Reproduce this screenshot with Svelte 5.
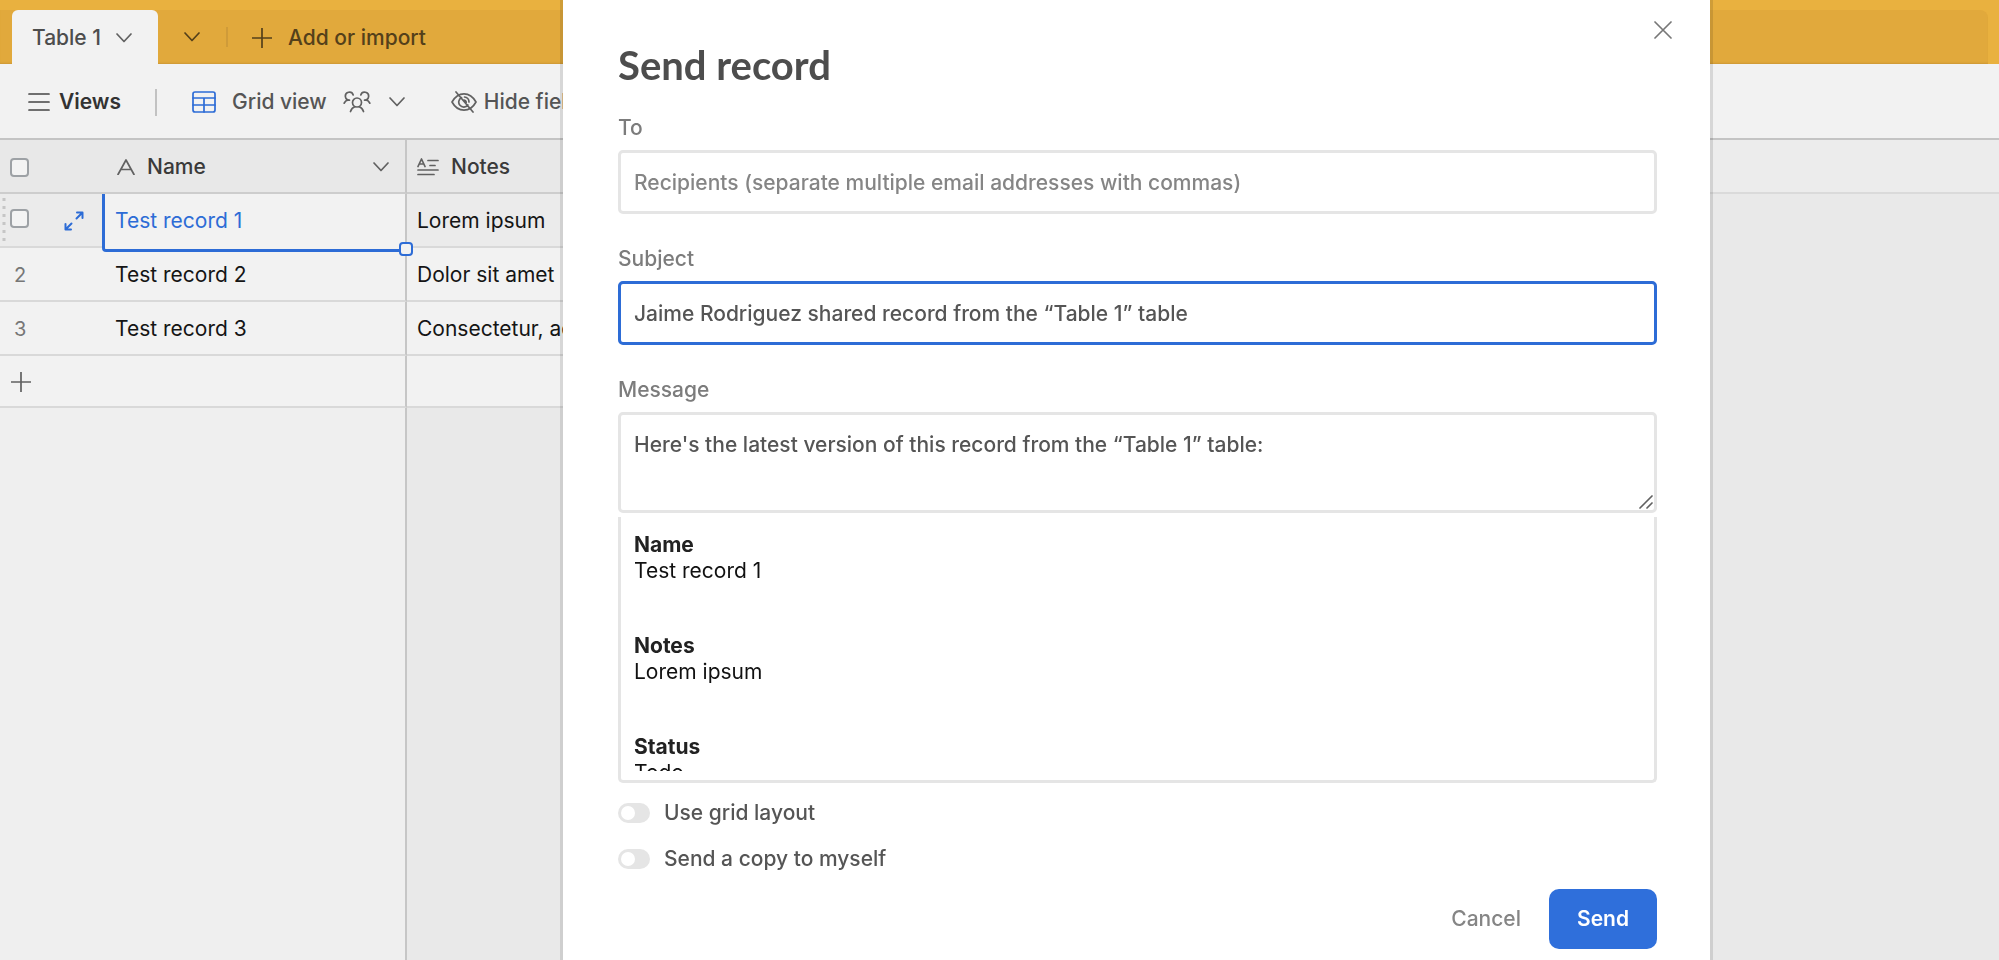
<script>
  const records = [
    { id: 2, name: 'Test record 2', notes: 'Dolor sit amet' },
    { id: 3, name: 'Test record 3', notes: 'Consectetur, adipiscing' },
  ];
  const preview = [
    { label: 'Name', value: 'Test record 1' },
    { label: 'Notes', value: 'Lorem ipsum' },
    { label: 'Status', value: 'Todo' },
  ];
  let to = $state('');
  let subject = $state('Jaime Rodriguez shared record from the “Table 1” table');
  let message = $state('Here\'s the latest version of this record from the “Table 1” table:');
  let gridLayout = $state(false);
  let copySelf = $state(false);
</script>

{#snippet chevron()}
  <svg class="chevron" viewBox="0 0 16 10" aria-hidden="true"><path d="M1 1l7 7.5L15 1" /></svg>
{/snippet}

{#snippet plus()}
  <svg class="plus" viewBox="0 0 20 20" aria-hidden="true"><path d="M10 0v20M0 10h20" /></svg>
{/snippet}

<div class="page">
  <nav class="tabs">
    <div class="strip">
      <button class="tab">Table 1 {@render chevron()}</button>
      <button class="more" aria-label="All tables">{@render chevron()}</button>
      <span class="split"></span>
      <button class="add">{@render plus()} Add or import</button>
    </div>
  </nav>

  <div class="toolbar">
    <button class="views">
      <svg width="22" height="20" viewBox="0 0 22 20" aria-hidden="true"><path d="M1 2h20M1 10h20M1 18h20" /></svg>
      Views
    </button>
    <span class="rule"></span>
    <button class="view">
      <svg class="blue" width="24" height="22" viewBox="0 0 24 22" aria-hidden="true">
        <rect x="1" y="1" width="22" height="20" rx="2" />
        <path d="M1 7h22M1 14h22M12 7v14" />
      </svg>
      <span>Grid view</span>
      <svg class="people" width="28" height="22" viewBox="0 0 28 22" aria-hidden="true">
        <circle cx="14" cy="11.500" r="4.500" />
        <path d="M7.500 20.500c1-2.800 2.800-4.200 4.300-4.700M20.500 20.500c-1-2.800-2.800-4.200-4.300-4.700" />
        <path d="M6.500 9.200A4 4 0 1 1 10.200 4M5.500 9C3.500 9.200 2 10.400 1.200 12.200" />
        <path d="M21.500 9.200A4 4 0 1 0 17.800 4M22.500 9c2 .2 3.500 1.400 4.300 3.200" />
      </svg>
      {@render chevron()}
    </button>
    <button class="hide">
      <svg width="26" height="22" viewBox="0 0 26 22" aria-hidden="true">
        <path d="M1 11C4 5.500 8 2.800 13 2.800S22 5.500 25 11c-3 5.500-7 8.200-12 8.200S4 16.500 1 11z" />
        <path d="M10.500 6.600a5 5 0 1 0 6.300 7.400M13.500 6a5 5 0 0 1 4.500 5M12.800 9a2.400 2.400 0 0 1 2.400 2.500M5 1l17 20" />
      </svg>
      Hide fields
    </button>
  </div>

  <table>
    <colgroup><col class="c-num" /><col class="c-name" /><col class="c-notes" /><col /></colgroup>
    <thead>
      <tr>
        <th><input type="checkbox" aria-label="Select all records" /></th>
        <th class="name">
          <div class="head">
            <svg width="18" height="16" viewBox="0 0 18 16" aria-hidden="true"><path d="M1 15.500L9 1l8 14.500M4 10.500h10" /></svg>
            <span>Name</span>
            {@render chevron()}
          </div>
        </th>
        <th class="notes">
          <div class="head">
            <svg class="long" width="22" height="18" viewBox="0 0 22 18" aria-hidden="true"><path d="M1 8.500L4.500 1 8 8.500M2.200 6h4.600M11 2.500h10M13 7.500h5M1 12h20M1 16.500h16" /></svg>
            <span>Notes</span>
          </div>
        </th>
        <th class="rest"></th>
      </tr>
    </thead>
    <tbody>
      <tr class="active">
        <td>
          <div class="lead">
            <svg class="drag" width="4" height="48" viewBox="0 0 4 48" aria-hidden="true"><path d="M2 1v47" /></svg>
            <input type="checkbox" aria-label="Select Test record 1" />
            <button aria-label="Expand record">
              <svg class="blue expand" width="20" height="20" viewBox="0 0 20 20" aria-hidden="true"><path d="M12.500 7.500L18.500 1.500M13 1.500h5.500V7M7.500 12.500L1.500 18.500M1.500 13v5.500H7" /></svg>
            </button>
          </div>
        </td>
        <td class="name">Test record 1<span class="outline"></span><span class="handle"></span></td>
        <td class="notes">Lorem ipsum</td>
        <td class="rest"></td>
      </tr>
      {#each records as record (record.id)}
        <tr>
          <td class="num">{record.id}</td>
          <td class="name">{record.name}</td>
          <td class="notes">{record.notes}</td>
          <td class="rest"></td>
        </tr>
      {/each}
      <tr class="new">
        <td><button aria-label="Add record">{@render plus()}</button></td>
        <td class="name"></td>
        <td class="notes"></td>
        <td class="rest"></td>
      </tr>
    </tbody>
  </table>
  <div class="below"></div>
</div>

<div class="overlay">
  <dialog open aria-labelledby="title">
    <button class="close" aria-label="Close">
      <svg width="18" height="18" viewBox="0 0 18 18" aria-hidden="true"><path d="M1 1l16 16M17 1L1 17" /></svg>
    </button>
    <h1 id="title">Send record</h1>

    <div class="field">
      <label for="to">To</label>
      <input id="to" type="text" placeholder="Recipients (separate multiple email addresses with commas)" bind:value={to} />
    </div>
    <div class="field">
      <label for="subject">Subject</label>
      <input id="subject" class="current" type="text" bind:value={subject} />
    </div>
    <div class="field message">
      <label for="message">Message</label>
      <div class="area">
        <textarea id="message" bind:value={message}></textarea>
        <svg class="grip" width="14" height="14" viewBox="0 0 14 14" aria-hidden="true"><path d="M1 13L13 1M8 13l5-5" /></svg>
      </div>
    </div>
    <div class="preview">
      <dl>
        {#each preview as item (item.label)}
          <div>
            <dt>{item.label}</dt>
            <dd>{item.value}</dd>
          </div>
        {/each}
      </dl>
    </div>

    <div class="toggles">
      <label><input type="checkbox" bind:checked={gridLayout} />Use grid layout</label>
      <label><input type="checkbox" bind:checked={copySelf} />Send a copy to myself</label>
    </div>

    <div class="actions">
      <button class="cancel">Cancel</button>
      <button class="send">Send</button>
    </div>
  </dialog>
</div>

<style>
  :global(body) {
    font-family: Inter, 'Liberation Sans', sans-serif;
    font-size: 21px;
    font-weight: 500;
    line-height: 26px;
    color: #555;
    background: #e9e9e9;
  }
  * { box-sizing: border-box; }
  button {
    display: flex;
    align-items: center;
    border: 0;
    padding: 0;
    background: none;
    font: inherit;
    color: inherit;
    white-space: nowrap;
  }
  svg {
    flex: none;
    fill: none;
    stroke: #616161;
    stroke-width: 1.7;
    stroke-linecap: round;
    stroke-linejoin: round;
  }
  .chevron { width: 16px; height: 10px; }
  .plus { width: 20px; height: 20px; stroke-linecap: butt; }
  .blue { stroke: #2d6cd6; }
  .page {
    display: flex;
    flex-direction: column;
    min-height: 100vh;
  }

  .tabs {
    background: #e9b13f;
    padding: 10px 11px 0 0;
  }
  .strip {
    display: flex;
    align-items: center;
    height: 54px;
    padding-left: 12px;
    background: #e1a93c;
    border-top-right-radius: 8px;
    box-shadow: inset 0 -2px 2px -1px #cd9936;
    color: #54401a;
  }
  .strip svg { stroke: #54401a; }
  .tab {
    gap: 15px;
    height: 54px;
    padding: 2px 26px 0 20px;
    background: #f2f2f2;
    border-radius: 6px 6px 0 0;
    color: #4d4d4d;
  }
  .strip .tab svg { stroke: #616161; }
  .more { margin-left: 26px; }
  .split {
    width: 2px;
    height: 20px;
    margin: 0 24px 0 26px;
    background: #cf9b39;
  }
  .add {
    gap: 16px;
    padding-top: 2px;
  }

  .toolbar {
    display: flex;
    align-items: center;
    height: 76px;
    padding: 2px 0 0 28px;
    overflow: hidden;
    background: #f2f2f2;
    border-bottom: 2px solid #c4c4c4;
  }
  .views {
    gap: 9px;
    font-weight: 600;
    color: #333;
  }
  .views svg { stroke: #444; }
  .rule {
    width: 2px;
    height: 27px;
    margin: 0 35px 0 34px;
    background: #c2c2c2;
  }
  .view { gap: 16px; }
  .view .chevron { margin-left: 2px; }
  .hide {
    gap: 7px;
    margin-left: 46px;
  }

  table {
    width: 100%;
    table-layout: fixed;
    border-spacing: 0;
    color: #151515;
  }
  .c-num { width: 102px; }
  .c-name { width: 305px; }
  .c-notes { width: 400px; }
  th, td {
    height: 54px;
    padding: 2px 0 0;
    background: #f2f2f2;
    border-bottom: 2px solid #d9d9d9;
    font-weight: 400;
    text-align: left;
    white-space: nowrap;
  }
  th {
    background: #e8e8e8;
    border-bottom-color: #cdcdcd;
    font-weight: 500;
    color: #3a3a3a;
  }
  .name {
    position: relative;
    padding-left: 13px;
    border-right: 2px solid #c6c6c6;
  }
  .notes { padding-left: 10px; }
  td.rest {
    background: #e9e9e9;
    border-bottom: 0;
  }
  th.rest {
    background: #ececec;
    border-bottom-color: #dadada;
  }
  .num {
    padding-left: 14px;
    font-size: 20px;
    color: #777;
  }
  .head {
    display: flex;
    align-items: center;
    gap: 12px;
  }
  .name .head { padding: 0 16px 0 2px; }
  .head .chevron { margin-left: auto; }
  input[type='checkbox'] {
    display: block;
    appearance: none;
    flex: none;
    margin: 0;
  }
  table input[type='checkbox'] {
    width: 19px;
    height: 19px;
    margin-left: 10px;
    border: 2px solid #9da1a5;
    border-radius: 4px;
    background: #f3f3f3;
  }
  .active td { background: #ebebeb; }
  .active .name {
    z-index: 1;
    background: #f2f2f2;
    color: #2d6cd6;
  }
  .active td.rest { background: #e9e9e9; }
  .lead {
    display: flex;
    align-items: center;
    padding-left: 2px;
  }
  .lead input[type='checkbox'] { margin: 0 0 6px 4px; }
  .lead button { margin-left: 35px; }
  .expand { stroke-width: 2; }
  .drag {
    stroke: #c6c6c6;
    stroke-width: 3;
    stroke-dasharray: 3 5;
    stroke-linecap: butt;
  }
  .outline {
    position: absolute;
    inset: 0 -2px -6px 0;
    border: solid #2d6cd6;
    border-width: 0 0 3px 3px;
    border-bottom-left-radius: 4px;
    background: linear-gradient(#f2f2f2, #f2f2f2) bottom / 100% 5px no-repeat;
  }
  .handle {
    position: absolute;
    right: -8px;
    bottom: -10px;
    width: 14px;
    height: 14px;
    border: 2px solid #2d6cd6;
    border-radius: 4px;
    background: #f2f2f2;
  }
  .new td { height: 52px; }
  .new button { margin-left: 11px; }
  .below {
    flex: 1;
    width: 407px;
    background: #efefef;
    border-right: 2px solid #c6c6c6;
  }

  .overlay {
    position: fixed;
    inset: 0;
    display: flex;
    padding: 0 289px 0 563px;
    overflow: hidden;
  }
  dialog {
    position: relative;
    flex: 1;
    margin: 0;
    padding: 43px 53px 11px 55px;
    border: 0;
    background: #fff;
    box-shadow: 0 0 0 3px rgba(0, 0, 0, 0.11);
    color: #555;
  }
  .close {
    position: absolute;
    top: 21px;
    right: 38px;
  }
  .close svg { stroke: #777; }
  h1 {
    margin: 0 0 22px;
    font: 700 40px/44px Lato, sans-serif;
    color: #4d4d4d;
  }
  .field {
    display: flex;
    flex-direction: column;
    gap: 9px;
    margin-bottom: 26px;
    padding-top: 6px;
  }
  .field label { color: #7c7c7c; }
  .field input, textarea {
    display: block;
    width: 100%;
    margin: 0;
    border: 3px solid #e5e5e5;
    border-radius: 5px;
    outline: 0;
    background: #fff;
    font: inherit;
    color: #555;
  }
  .field input {
    height: 64px;
    padding: 0 13px;
  }
  .field input.current { border-color: #2d6cd6; }
  .field input::placeholder { color: #858585; }
  .message { margin-bottom: 4px; }
  .area { position: relative; }
  textarea {
    height: 101px;
    padding: 17px 13px;
    resize: none;
  }
  .grip {
    position: absolute;
    right: 4px;
    bottom: 4px;
  }
  .preview {
    height: 266px;
    margin-bottom: 20px;
    padding: 15px 13px 9px;
    border: 3px solid #e5e5e5;
    border-top: 0;
    border-radius: 0 0 5px 5px;
  }
  dl {
    height: 239px;
    margin: 0;
    overflow: hidden;
  }
  dl div { margin-bottom: 49px; }
  dt {
    font-weight: 700;
    color: #222;
  }
  dd {
    margin: 0;
    font-weight: 400;
    color: #111;
  }
  .toggles {
    display: flex;
    flex-direction: column;
    gap: 26px;
    margin-bottom: 20px;
  }
  .toggles label {
    display: flex;
    align-items: center;
    gap: 14px;
    height: 20px;
  }
  .toggles input[type='checkbox'] {
    width: 32px;
    height: 20px;
    padding: 3px;
    border-radius: 10px;
    background: #e5e5e5;
  }
  .toggles input::before {
    content: '';
    display: block;
    width: 14px;
    height: 14px;
    border-radius: 50%;
    background: #fff;
  }
  .toggles input:checked { background: #2d6cd6; }
  .toggles input:checked::before { margin-left: auto; }
  .actions {
    display: flex;
    justify-content: flex-end;
    gap: 28px;
  }
  .cancel { color: #858585; }
  .send {
    justify-content: center;
    height: 60px;
    padding: 0 28px;
    border-radius: 10px;
    background: #2f6fdb;
    font-weight: 600;
    color: #fff;
  }
</style>
